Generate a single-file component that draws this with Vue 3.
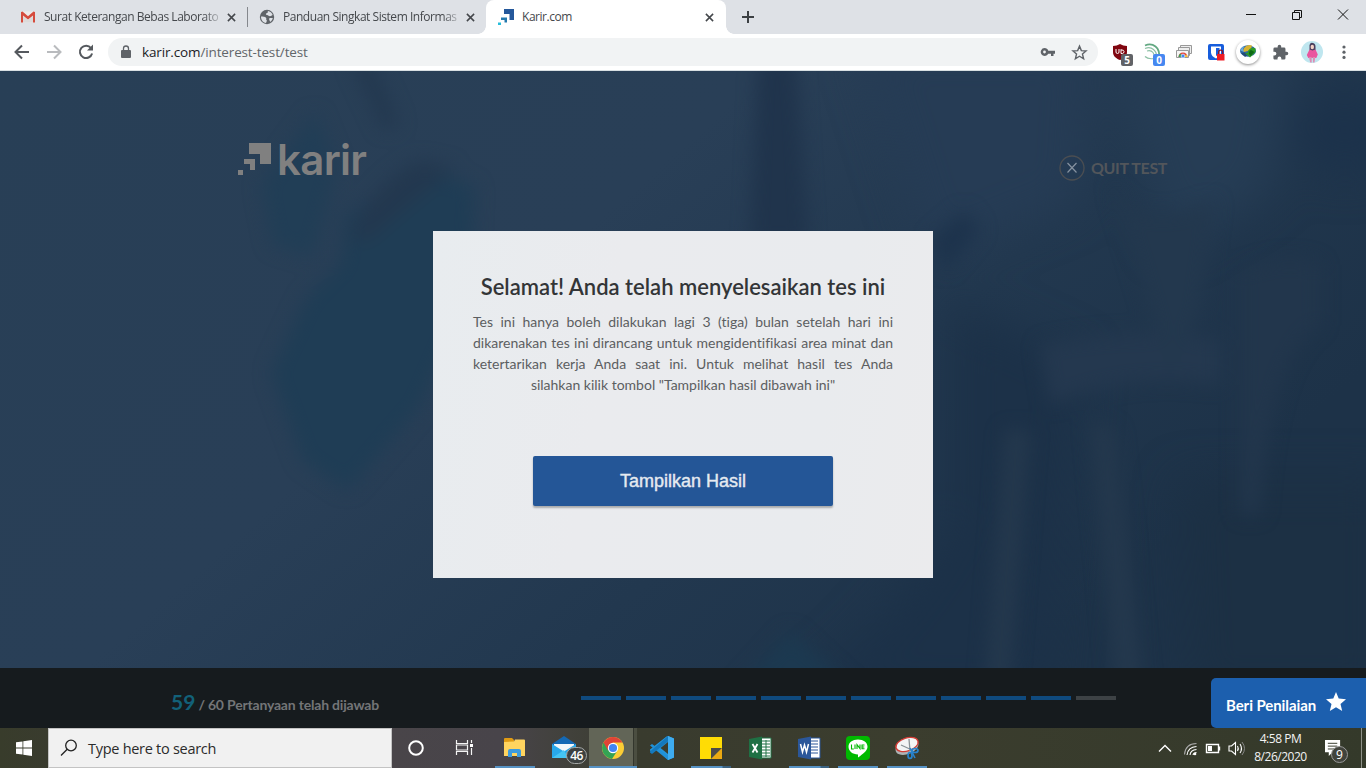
<script setup>
const tabs = [
  { id: 'mail', title: 'Surat Keterangan Bebas Laborato' },
  { id: 'globe', title: 'Panduan Singkat Sistem Informas' },
  { id: 'karir', title: 'Karir.com', active: true },
]
const lines = [
  'Tes ini hanya boleh dilakukan lagi 3 (tiga) bulan setelah hari ini',
  'dikarenakan tes ini dirancang untuk mengidentifikasi area minat dan',
  'ketertarikan kerja Anda saat ini. Untuk melihat hasil tes Anda',
]
</script>

<template>
  <div class="screen">
    <header class="tabstrip">
      <div v-for="t in tabs" :key="t.id" class="tab" :class="[t.id, { active: t.active }]">
        <svg v-if="t.id === 'mail'" class="fav" viewBox="0 0 16 16">
          <path d="M1 2.500h14v11H1z" fill="#eceaea" />
          <path d="M3 7l5 4 5-4v6.500H3z" fill="#dcdada" />
          <path d="M1 3v10.500h2V6.500l5 4 5-4v7h2V3l-1.500-.5L8 7.300 2.500 2.500z" fill="#d54b3d" />
        </svg>
        <svg v-else-if="t.id === 'globe'" class="fav" viewBox="0 0 16 16">
          <circle cx="8" cy="8" r="7.200" fill="#5f6368" />
          <path d="M2 7.500c2 0 4 .2 5 1.200s-.5 1.800.5 2.300-.2 2-.5 3C4 13.500 2 11 2 7.500zM9 2c2 .3 4 1.800 4.700 4-1.200 0-1.200 1.300-2.700 1.300S9.500 6 8 6 6.500 4.200 8 4s.3-1.500 1-2zM10.500 9h3.300c-.3 1.800-1.300 3.200-2.800 4 .3-1.500-1.500-1.700-.5-4z" fill="#dee1e6" />
        </svg>
        <svg v-else class="fav" viewBox="0 0 16 16">
          <path d="M6 0h10v11h-4.500V5H6z" fill="#25589b" />
          <path d="M3 8.500h6v5H6.500V11H3z" fill="#2479ad" />
          <path d="M0 13.500h3V16H0z" fill="#27bddb" />
        </svg>
        <span class="title">{{ t.title }}</span>
        <svg class="close" viewBox="0 0 10 10"><path d="M1 1l8 8M9 1L1 9" /></svg>
      </div>
      <svg class="plus" viewBox="0 0 12 12"><path d="M6 0v12M0 6h12" /></svg>
      <div class="winbtns">
        <svg viewBox="0 0 46 28"><path d="M18 14.500h10" /></svg>
        <svg viewBox="0 0 46 28"><path d="M18.500 12.500h7v7h-7zM20.500 12V10.500h7v7H26" /></svg>
        <svg viewBox="0 0 46 28"><path d="M18 9.500l10 10M28 9.500l-10 10" /></svg>
      </div>
    </header>

    <div class="toolbar">
      <svg class="nav" viewBox="0 0 32 32"><path d="M23 16H10M16 9.500L9.500 16l6.500 6.500" stroke="#55595e" /></svg>
      <svg class="nav" viewBox="0 0 32 32"><path d="M9 16h13M16 9.500l6.500 6.500-6.500 6.500" stroke="#b9bbbe" /></svg>
      <svg class="nav" viewBox="0 0 32 32">
        <path d="M21 12a6.200 6.200 0 1 0 1.100 5.500" stroke="#55595e" />
        <path d="M23 8.500v6h-6z" fill="#55595e" />
      </svg>
      <div class="omni">
        <svg class="lock" viewBox="0 0 10 14"><path d="M1 5h8q1 0 1 1v6q0 1-1 1H1q-1 0-1-1V6q0-1 1-1z" fill="#5f6368" /><path d="M2.500 5.500V3.500a2.500 2.500 0 0 1 5 0v2" fill="none" stroke="#5f6368" stroke-width="1.300" /></svg>
        <span class="url">karir.com<i>/interest-test/test</i></span>
        <svg class="key" viewBox="0 0 16 10"><path d="M4.500 1a4 4 0 0 1 3.800 2.800H15v3h-1.500V9H11V6.800H8.300A4 4 0 1 1 4.500 1zm0 2.600a1.400 1.400 0 1 0 0 2.800 1.400 1.400 0 0 0 0-2.800z" fill="#5f6368" fill-rule="evenodd" /></svg>
        <svg class="star" viewBox="0 0 24 24"><path d="M12 3l2.600 6.300 6.700.5-5.100 4.400 1.600 6.600L12 17.300l-5.800 3.500 1.600-6.600L2.700 9.800l6.700-.5z" fill="none" stroke="#5f6368" stroke-width="2" /></svg>
      </div>
      <div class="exts">
        <div class="ext">
          <svg viewBox="0 0 32 32"><path d="M16 8c2 1.300 4.500 2 7 2v6c0 4-3 6.500-7 8-4-1.500-7-4-7-8v-6c2.500 0 5-.7 7-2z" fill="#800610" /><path d="M12 13v3q0 1.500 1.500 1.500T15 16v-3M17 13.200v4.300h1.500q1.500-.2 1.500-2t-3-1.500" fill="none" stroke="#fff" /></svg>
          <b class="badge gray">5</b>
        </div>
        <div class="ext">
          <svg viewBox="0 0 32 32" fill="none" stroke="#8cc0a4"><path d="M9 9.500q6-2.500 10.500 1T23 22" stroke-width="1.800" stroke="#62a882" /><path d="M9 12.500q5-2 8.500 1t3 7M11 15q4-1 6 1.500t1 5.500M9 20.500q3 3 9 2" stroke-width="1.200" /></svg>
          <b class="badge blue">0</b>
        </div>
        <div class="ext">
          <svg viewBox="0 0 32 32" stroke="#999" fill="#eee"><path d="M12.500 9.500h11v8h-11z" /><path d="M10.500 11.500h11v8h-11z" /><path d="M8.500 14.500h12v7h-12z" fill="#f6f6f6" /><path d="M10.500 21a4.500 4.500 0 0 1 9 0z" fill="#e2463a" stroke="none" /><path d="M10.500 21a5 5 0 0 1 1.800-3.500l2.700 3.500z" fill="#3a9c55" stroke="none" /><path d="M19.500 21a5 5 0 0 0-1-2.500l-3 2.500z" fill="#f7c530" stroke="none" /><circle cx="15" cy="20" r="1.900" fill="#4285f4" stroke="#fff" stroke-width=".6" /></svg>
        </div>
        <div class="ext">
          <svg viewBox="0 0 32 32"><rect x="8" y="8" width="16" height="16" rx="2" fill="#175ddc" /><path d="M11 10.500h10v6c0 2.500-2 4.500-5 6-3-1.500-5-3.500-5-6z" fill="#fff" /><path d="M16 12h3.500v6L16 20z" fill="#175ddc" /><path d="M17 18h7.500v6.500H17z" fill="#ee1c24" /><path d="M18.700 18v-1.800a2 2 0 0 1 4 0V18" fill="none" stroke="#8b1525" stroke-width="1.300" /></svg>
        </div>
        <div class="ext">
          <div class="round"><svg viewBox="0 0 24 24"><ellipse cx="12" cy="11" rx="8" ry="5.800" fill="#2c6aa6" /><path d="M8 8q3-4 8-2.500L15 9l-3 2-4 1-1-1.500z" fill="#d8b231" /><path d="M4.500 10.500q1-4 4-4.500L7 9l1 3z" fill="#69a9dc" /><path d="M5 13l4-.5 2 3-2 1.500z" fill="#244a77" /><path d="M14 8.500q4-1.500 5.500 0v3.500L14 17.500 9 13h2.500q.5-3 2.500-4.500z" fill="#2c9b26" /><path d="M15 10q-2 .5-2 4l1.500 2 4-4z" fill="#0e6a16" /></svg></div>
        </div>
        <div class="ext">
          <svg viewBox="0 0 24 24" class="puzzle"><path fill="#5f6368" d="M20.500 11H19V7a2 2 0 0 0-2-2h-4V3.500a2.500 2.500 0 0 0-5 0V5H4a2 2 0 0 0-2 2v3.800h1.500a2.700 2.700 0 0 1 0 5.400H2V20c0 1.100.9 2 2 2h3.800v-1.500a2.700 2.700 0 0 1 5.400 0V22H17a2 2 0 0 0 2-2v-4h1.500a2.500 2.500 0 0 0 0-5z" /></svg>
        </div>
        <div class="ext">
          <svg viewBox="0 0 32 32"><circle cx="16" cy="16" r="11" fill="#bfe6ef" /><path d="M13.500 9q1-3 3.500-2 2.500.5 2.500 3.500V16h-6z" fill="#49405e" /><ellipse cx="16.300" cy="11" rx="1.700" ry="2.300" fill="#f3d1c6" /><path d="M13.500 13.500l3 1 3-1 2.300 5-1.500 3.500h-8l-1.500-3z" fill="#e9559f" /><path d="M13 21h2.700v5.500h-1.500zM16.800 21h2.500l-.8 5.500H17z" fill="#dc8db5" /></svg>
        </div>
        <div class="ext"><svg viewBox="0 0 32 32" fill="#5f6368"><circle cx="16" cy="11" r="1.600" /><circle cx="16" cy="16.200" r="1.600" /><circle cx="16" cy="21.400" r="1.600" /></svg></div>
      </div>
    </div>

    <main class="page">
      <svg class="backdrop" viewBox="0 71 1366 597" preserveAspectRatio="none">
        <defs>
          <linearGradient id="base" x1="0" y1="0" x2="1" y2=".5">
            <stop offset="0" stop-color="#283f56" /><stop offset=".45" stop-color="#293f57" />
            <stop offset=".72" stop-color="#22384f" /><stop offset="1" stop-color="#1d3248" />
          </linearGradient>
          <filter id="soft" x="-50%" y="-50%" width="200%" height="200%" color-interpolation-filters="sRGB"><feGaussianBlur stdDeviation="9" /></filter>
          <filter id="haze" x="-50%" y="-50%" width="200%" height="200%" color-interpolation-filters="sRGB"><feGaussianBlur stdDeviation="22" /></filter>
        </defs>
        <path d="M0 71h1366v597H0z" fill="url(#base)" />
        <g filter="url(#haze)">
          <path d="M860 40h230l-10 160-150 60z" fill="#263c55" />
          <path d="M950 300l130 60-30 340H790q100-70 160-180z" fill="#1c3148" />
          <path d="M1110 60h180l-20 130-100 60z" fill="#263d55" />
          <path d="M1180 480h210v220h-200z" fill="#1c3044" />
          <ellipse cx="1345" cy="130" rx="55" ry="45" fill="#1c324b" />
        </g>
        <g filter="url(#soft)">
          <path d="M315 112l22 55-24 90-40-12-12-60z" fill="#213e56" />
          <path d="M345 215l82-48 48 20-5 105-50 115-72 84-45-30-32-88 35-75 35-35z" fill="#1f3d55" />
          <path d="M350 235q25-55 70-75l35 8-55 45-35 30z" fill="#23384f" />
          <path d="M351 60h20l28 65-15 5z" fill="#23384f" />
          <path d="M758 55h38l12 190h-58z" fill="#20344c" />
          <path d="M930 240l35-30 15 20-35 42z" fill="#1d334c" />
          <path d="M1040 345q90-20 180-5v45q-90-15-170 20z" fill="#24384f" />
          <path d="M1240 270q50-20 80-5v60q-50 30-60 190h-20z" fill="#22364c" />
          <path d="M1005 430h25l-20 260h-25zM1090 420l25 10 30 260h-30z" fill="#24384d" />
          <path d="M1110 180q25 55 105 20l-15 110-30 70-20-70z" fill="#23384e" />
          <path d="M735 690l55-60 65 60z" fill="#1c3950" />
        </g>
      </svg>
      <div class="brand">
        <svg class="mark" viewBox="0 0 33 32" fill="#808080"><path d="M11 0h22v21H22V11H11zM6 16h11v11h-5v-6H6zM0 27h5v5H0z" /></svg>
        <span>karir</span>
      </div>
      <div class="quit">
        <svg viewBox="0 0 26 26" fill="none"><circle cx="13" cy="13" r="12" stroke="#4b4e52" stroke-width="1.300" /><path d="M8.500 8l9 9.500M17.500 8l-9 9.500" stroke="#8793a1" stroke-width="1.200" /></svg>
        <span>QUIT TEST</span>
      </div>
      <section class="modal">
        <h1>Selamat! Anda telah menyelesaikan tes ini</h1>
        <p>
          <span v-for="l in lines" :key="l" class="line">{{ l }}</span>
          <span class="last">silahkan kilik tombol "Tampilkan hasil dibawah ini"</span>
        </p>
        <button>Tampilkan Hasil</button>
      </section>
    </main>

    <footer class="progress">
      <div class="count"><b>59</b><span>/ 60 Pertanyaan telah dijawab</span></div>
      <div class="bars"><i v-for="n in 12" :key="n" :class="{ off: n === 12 }"></i></div>
      <div class="rate"><span>Beri Penilaian</span>
        <svg viewBox="0 0 20 19"><path d="M10 0l2.700 6.600 7.300.6-5.500 4.700 1.700 7.100L10 15.200 3.800 19l1.700-7.100L0 7.200l7.300-.6z" fill="#fff" /></svg>
      </div>
    </footer>

    <div class="taskbar">
      <div class="start"><svg viewBox="0 0 16 16" fill="#fff"><path d="M0 2.300l6.500-.9v6.200H0zM7.300 1.300L16 0v7.600H7.300zM0 8.400h6.500v6.200L0 13.700zM7.300 8.400H16V16l-8.700-1.200z" /></svg></div>
      <div class="search">
        <svg viewBox="0 0 18 18" fill="none" stroke="#222" stroke-width="1.300"><circle cx="11" cy="6.500" r="5.300" /><path d="M7.200 10.300L1 16.500" /></svg>
        <span>Type here to search</span>
      </div>
      <div class="cell"><svg viewBox="0 0 49 40"><circle cx="24" cy="20" r="6.800" fill="none" stroke="#fff" stroke-width="2" /></svg></div>
      <div class="cell"><svg viewBox="0 0 49 40" fill="none" stroke="#f4f4f4" stroke-width="1.200"><path d="M15.500 12v3.500h11V12M15.500 27v-3.500h11V27M15.500 17h11v5h-11zM30.500 12v3M30.500 20v7" /><path d="M29 16h3v3h-3z" fill="#fff" stroke="none" /></svg></div>
      <div class="cell run"><svg viewBox="0 0 49 40"><path d="M14 11q0-1 1-1h7l2 2v4H14z" fill="#e09b14" /><path d="M14 14l10-.5 1-2h9q1 0 1 1V28H14z" fill="#ffd45f" /><path d="M18 29v-6q0-2 2-2h9q2 0 2 2v6h-4v-4h-5v4z" fill="#3d9bdd" /></svg></div>
      <div class="cell"><svg viewBox="0 0 49 40"><path d="M13 16l12-8 12 8v14H13z" fill="#1469b5" /><path d="M15 16h20v9l-10 4-10-6z" fill="#f3f7fa" /><path d="M13 16l12 7.500L37 16v14H13z" fill="#28a8ea" /><path d="M13 30l12-8 4 8z" fill="#45c4f3" /></svg><b class="mailcount">46</b></div>
      <div class="cell current"><svg viewBox="0 0 49 40"><circle cx="25" cy="20" r="11" fill="#fccd35" /><path d="M25 20L15.500 14.500a11 11 0 0 0 8.500 16.400L29.500 22.500z" fill="#34a354" /><path d="M15.500 14.500A11 11 0 0 1 34.500 14.500H25l-5 8z" fill="#e04437" /><circle cx="25" cy="20" r="5.200" fill="#fff" /><circle cx="25" cy="20" r="4.100" fill="#4285f4" /></svg></div>
      <div class="cell"><svg viewBox="0 0 49 40"><path d="M31 8l6 2.500v19L31 32 19 20.500l-4 3.500-2-1.500v-1l16.500-13z" fill="#2496dd" /><path d="M13 17.500l2-1.500 17 12.500V32h-1z" fill="#2091d8" /><path d="M31 8v5.500L15 26l-2-1.500v-1z" fill="#1479bd" /><path d="M31 14v12l-7.500-6z" fill="#3a3d2e" /><path d="M31 8l6 2.500v19L31 32z" fill="#3eacf0" /></svg></div>
      <div class="cell run multi"><svg viewBox="0 0 49 40"><path d="M14 9h22v22H14z" fill="#ffdc05" /><path d="M25 31l11-11v11z" fill="#eba912" /><path d="M25 20h11L25 31z" fill="#4d4b47" /></svg></div>
      <div class="cell"><svg viewBox="0 0 49 40"><path d="M25 10h11v20H25z" fill="#fff" stroke="#217346" /><path d="M27 13h8M27 16h8M27 19h8M27 22h8M27 25h8M27 28h8M31 12v17" stroke="#217346" /><path d="M14 11l13-2.500v23L14 29z" fill="#1f7044" /><path d="M17.500 16l5 8.500M22.500 16l-5 8.500" stroke="#fff" stroke-width="1.800" /></svg></div>
      <div class="cell run multi"><svg viewBox="0 0 49 40"><path d="M25 10h11v20H25z" fill="#fff" stroke="#2b579a" /><path d="M27 13h7M27 16h7M27 19h7M27 22h7M27 25h7" stroke="#2b579a" /><path d="M14 11l13-2.500v23L14 29z" fill="#2b579a" /><path d="M16.500 16l2 8 2-7 2 7 2-8" stroke="#fff" stroke-width="1.500" fill="none" /></svg></div>
      <div class="cell run"><svg viewBox="0 0 49 40"><rect x="13" y="8" width="24" height="24" rx="4" fill="#00b900" /><path d="M25 11.500c5.500 0 9.500 3 9.500 7.300 0 4-4.500 7.200-9.500 10.700v-3c-5.500 0-9.500-3.300-9.500-7.700s4-7.300 9.500-7.300z" fill="#fff" /><path d="M18.500 16.500v4.500h2.300M22 16.500V21M24 21v-4.300l3 4v-4.200M31.500 17H29v3.700h2.500M29 19h2.300" fill="none" stroke="#00b900" stroke-width="1.100" /></svg></div>
      <div class="cell run"><svg viewBox="0 0 49 40"><ellipse cx="25" cy="19" rx="12" ry="7" transform="rotate(-22 25 19)" fill="#aeb3b5" /><ellipse cx="25" cy="16.500" rx="11.500" ry="6.500" transform="rotate(-18 25 16.500)" fill="#f3f5f5" stroke="#d43c35" stroke-width="1.300" /><path d="M19 17l11 5M27 11l1 12" stroke="#8b9295" stroke-width="1.300" /><ellipse cx="33" cy="22.500" rx="3" ry="2" fill="none" stroke="#2884ce" stroke-width="1.700" /><ellipse cx="28" cy="27.500" rx="2" ry="3" fill="none" stroke="#2884ce" stroke-width="1.700" /><path d="M28 20l2 4 3 6" fill="none" stroke="#2884ce" stroke-width="1.600" /></svg></div>
      <div class="tray">
        <svg viewBox="0 0 100 40" fill="none" stroke="#fff" stroke-width="1.400">
          <path d="M10 23.500l6-6 6 6" />
          <g stroke-width="1.100"><path d="M35.500 26.500q1-11 12-11" stroke="#aaa" /><path d="M38 27q1-8 9.500-8.500M41 27q.5-5 6.500-5.500M44 27q.5-2.500 3.500-2.500" /></g><circle cx="46" cy="26" r="1.300" fill="#fff" stroke="none" />
          <path d="M57.500 16.500h12v8h-12zM70.500 18.500v4" /><path d="M59 18h4v5h-4z" fill="#fff" stroke="none" />
          <path d="M80 18h2.500l4-3.500v12l-4-3.500H80zM88.500 18q1.500 2.500 0 5M91 16q3 4.500 0 9" stroke-width="1.100" /><path d="M93 14q5 6.500 0 13" stroke="#888" stroke-width="1" />
        </svg>
        <div class="clock"><span>4:58 PM</span><span>8/26/2020</span></div>
        <div class="notice"><svg viewBox="0 0 18 18"><path d="M0 0h16v13H8l-4 4v-4H0z" fill="#fff" /><path d="M3 3.500h10M3 6.500h10M3 9.500h7" stroke="#333729" /></svg><b>9</b></div>
        <i class="edge"></i>
      </div>
    </div>
  </div>
</template>

<style>
body { margin: 0; overflow: hidden; }
</style>

<style scoped>
* { box-sizing: border-box; }
svg { display: block; flex: none; }
.screen { width: 1366px; height: 768px; display: flex; flex-direction: column; font-family: "Open Sans", "Noto Sans", sans-serif; overflow: hidden; }
.tabstrip { height: 34px; background: #dee1e6; display: flex; padding-left: 8px; flex: none; }
.tab { width: 239px; height: 34px; display: flex; align-items: center; padding: 0 10px 0 12px; position: relative; }
.tab.mail::after { content: ""; position: absolute; right: -1px; top: 7px; width: 1px; height: 20px; background: #85888d; }
.tab.active { width: 240px; background: #fff; border-radius: 8px 8px 0 0; }
.tab.active::before, .tab.active::after { content: ""; position: absolute; bottom: 0; width: 8px; height: 8px; }
.tab.active::before { left: -8px; background: radial-gradient(circle at 0 0, transparent 7.500px, #fff 8px); }
.tab.active::after { right: -8px; background: radial-gradient(circle at 100% 0, transparent 7.500px, #fff 8px); }
.fav { width: 16px; height: 16px; margin-right: 8px; }
.title { width: 177px; white-space: nowrap; font-size: 12px; letter-spacing: -.46px; color: #45484c; line-height: 20px; }
.mail .title, .globe .title { mask-image: linear-gradient(90deg, #000 90%, rgba(0,0,0,.15)); }
.close { width: 9px; height: 9px; margin-left: 6px; }
.close path { stroke: #44474b; stroke-width: 1.700; }
.plus { width: 12px; height: 12px; margin: 11px 0 0 16px; }
.plus path { stroke: #3c4043; stroke-width: 2; }
.winbtns { margin-left: auto; display: flex; }
.winbtns svg { width: 46px; height: 28px; fill: none; stroke: #111; stroke-width: 1; }
.toolbar { height: 37px; background: #fff; border-bottom: 1px solid #d8dfe2; display: flex; align-items: center; padding-left: 6px; flex: none; }
.nav { width: 32px; height: 32px; }
.nav path { fill: none; stroke-width: 2; }
.nav path[fill] { fill: #55595e; }
.omni { width: 990px; height: 28px; margin-left: 6px; border-radius: 14px; background: #f1f3f4; display: flex; align-items: center; padding: 0 10px 0 13px; }
.lock { width: 10px; height: 14px; }
.url { margin-left: 11px; font-size: 13.500px; color: #202124; letter-spacing: -.14px; line-height: 20px; }
.url i { font-style: normal; color: #62666a; }
.key { width: 16px; height: 10px; margin-left: auto; margin-right: 15px; }
.star { width: 17px; height: 17px; }
.exts { display: flex; margin-left: 6px; }
.ext { width: 32px; height: 32px; position: relative; display: flex; align-items: center; justify-content: center; }
.ext svg { width: 32px; height: 32px; }
.ext svg.puzzle { width: 17px; height: 17px; }
.badge { position: absolute; left: 17px; top: 18px; width: 12px; height: 12px; border-radius: 2px; color: #fff; font: bold 10px/12px "Open Sans", sans-serif; text-align: center; }
.gray { background: #616367; }
.blue { background: #4688f1; }
.round { width: 24px; height: 24px; border-radius: 50%; background: #fff; box-shadow: 0 1px 3px rgba(0,0,0,.45); }
.ext .round svg { width: 24px; height: 24px; }
.page { height: 597px; flex: none; position: relative; background: #283e56; display: grid; grid-template-columns: 433px 500px 1fr; }
.backdrop { position: absolute; inset: 0; width: 100%; height: 100%; }
.brand { position: relative; display: flex; height: 34px; margin: 72px 0 0 238px; gap: 6px; }
.mark { width: 33px; height: 32px; }
.brand span { font: 600 42px/33px Inter, sans-serif; color: #808080; letter-spacing: -.7px; }
.modal { position: relative; grid-column: 2; grid-row: 1; margin-top: 160px; width: 500px; height: 347px; background: linear-gradient(100deg, #e8ecef, #eaebee 35%, #e9ebee 75%, #ebebed); padding: 41px 40px 0; display: flex; flex-direction: column; align-items: center; }
h1 { margin: 0; font: 600 22px/30px Lato, sans-serif; color: #333537; white-space: nowrap; }
.modal p { width: 420px; margin: 9px 0 0; font: 400 14px/21px Lato, sans-serif; color: #5c5e61; font-variant-ligatures: none; }
.line { display: block; text-align: justify; text-align-last: justify; white-space: nowrap; }
.last { display: block; text-align: center; white-space: nowrap; }
button { width: 300px; height: 50px; margin: 61px 0 0; padding: 0; border: 0; border-radius: 2px; background: #245697; box-shadow: 0 2px 2px rgba(0,0,0,.28); color: #e5eaf0; font: 18px/50px "Liberation Sans", Arial, sans-serif; -webkit-text-stroke: .4px #e5eaf0; }
.quit { position: relative; grid-column: 3; grid-row: 1; display: flex; align-items: center; height: 26px; margin: 84px 0 0 126px; gap: 6px; }
.quit svg { width: 26px; height: 26px; }
.quit span { font: 700 16px/20px Lato, sans-serif; color: #52565b; white-space: nowrap; letter-spacing: -.35px; }
.progress { height: 60px; background: #161b1e; flex: none; display: flex; position: relative; }
.count { width: 581px; padding: 20px 0 0 171px; display: flex; align-items: baseline; white-space: nowrap; font-family: Lato, sans-serif; color: #737577; font-size: 14px; line-height: 28px; font-weight: 700; letter-spacing: -.19px; }
.count b { color: #126179; font-size: 21px; font-weight: 700; letter-spacing: 0; margin-right: 3px; }
.bars { display: flex; gap: 5px; padding-top: 28px; }
.bars i { width: 40px; height: 4px; background: #0f4a7e; }
.bars .off { background: #3d4245; }
.rate { margin: 10px 0 0 auto; width: 155px; height: 50px; background: #1c5fae; border-radius: 5px 0 0 5px; display: flex; align-items: center; padding: 3px 0 0 15px; color: #fff; font: 700 15px/20px Lato, sans-serif; letter-spacing: -.08px; white-space: nowrap; }
.rate span { width: 90px; }
.rate svg { width: 20px; height: 19px; margin: -7px 0 0 10px; }
.taskbar { height: 40px; flex: none; display: flex; background: linear-gradient(90deg, #383c2b 0, #393b2e 48px, #494549 392px, #48444a 500px, #41413b 570px, #393b2e 640px, #3b3d2e 900px, #34392a 1366px); }
.start { width: 48px; display: flex; align-items: center; justify-content: center; }
.start svg { width: 16px; height: 16px; }
.search { width: 344px; background: #f1f1f1; border: 1px solid #c3c3c3; display: flex; align-items: center; padding-left: 11px; color: #2b2b2b; font-size: 14.500px; letter-spacing: -.28px; }
.search svg { width: 18px; height: 18px; margin-right: 10px; }
.cell { width: 49px; height: 40px; position: relative; }
.cell svg { width: 49px; height: 40px; position: relative; }
.run::after { content: ""; position: absolute; left: 5px; bottom: 0; width: 40px; height: 2px; background: #5692c4; }
.multi::after { background: linear-gradient(90deg, #5692c4 31px, #3a6180 32px); }
.current { background: linear-gradient(90deg, transparent 1px, #626557 1px, #626557 45px, #33362d 45px, #33362d 46px, #4b4e41 46px); }
.current::after { content: ""; position: absolute; left: 1px; bottom: 0; width: 48px; height: 2px; background: #5692c4; }
.mailcount { position: absolute; left: 27px; top: 19px; width: 21px; height: 17px; border-radius: 9px; border: 1px solid #a4a7a6; background: #3d4141; color: #fff; font: 600 12px/15px "Open Sans", sans-serif; text-align: center; letter-spacing: -.6px; }
.tray { margin-left: auto; display: flex; position: relative; width: 217px; }
.tray > svg { width: 100px; height: 40px; }
.clock { width: 63px; display: flex; flex-direction: column; text-align: center; color: #f3f3f3; font-size: 12px; line-height: 18px; letter-spacing: -.48px; padding-top: 2px; }
.notice { width: 36px; padding: 12px 0 0 13px; position: relative; }
.notice svg { width: 17px; height: 17px; }
.notice b { position: absolute; left: 19px; top: 18px; width: 17px; height: 17px; border-radius: 50%; border: 1px solid #999; background: #41433c; color: #fff; font: 12px/15px "Open Sans", sans-serif; text-align: center; }
.edge { position: absolute; right: 4px; top: 0; width: 1px; height: 40px; background: #8e9188; }
</style>
